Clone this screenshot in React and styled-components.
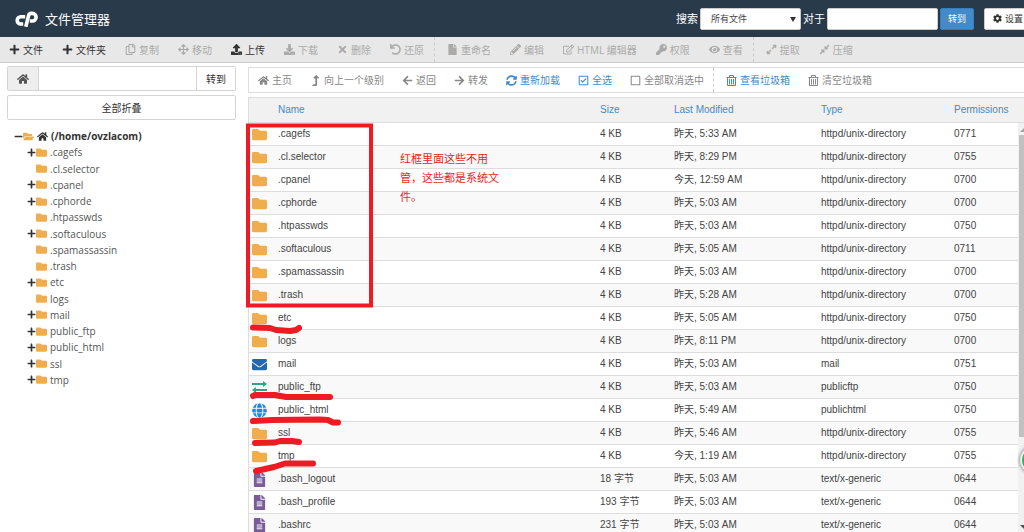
import React from "react";
import styled, { createGlobalStyle } from "styled-components";
import {
  FaPlus, FaMinus, FaRegCopy, FaArrowsAlt, FaUpload, FaDownload, FaTimes, FaUndo, FaFile,
  FaPencilAlt, FaRegEdit, FaKey, FaEye, FaExpandAlt, FaCompressAlt, FaHome, FaLevelUpAlt,
  FaArrowLeft, FaArrowRight, FaSyncAlt, FaRegCheckSquare, FaRegSquare, FaCog,
  FaFolder, FaFolderOpen, FaEnvelope, FaGlobe, FaFileAlt,
} from "react-icons/fa";

const sans = `"Open Sans", "Noto Sans CJK SC", sans-serif`;
const arial = `"Liberation Sans", "Noto Sans CJK SC", sans-serif`;

const Global = createGlobalStyle`
  * { box-sizing: border-box; }
  body { margin: 0; background: #fff; color: #333; font: 10px/16px ${sans}; overflow: hidden; }
  button, input, select { font: inherit; color: inherit; margin: 0; }
`;

const Page = styled.div`
  position: relative;
  height: 100vh;
  display: flex;
  flex-direction: column;
  overflow: hidden;
`;

const Header = styled.header`
  flex: none;
  height: 37px;
  padding-left: 15px;
  background: #293a4a;
  color: #fff;
  display: flex;
  align-items: center;
  overflow: hidden;
`;

const Logo = styled.svg`
  width: 23px;
  height: 16px;
  margin-right: 7px;
`;

const Title = styled.h1`
  margin: 0;
  flex: 1;
  font-size: 13px;
  line-height: 20px;
  font-weight: 400;
`;

const Search = styled.form`
  display: flex;
  align-items: center;
  flex: none;
  font-size: 11px;
  margin-right: -18px;
`;

const Select = styled.select`
  width: 101px;
  height: 22px;
  margin: 0 2px;
  padding: 0 10px;
  appearance: none;
  border: 1px solid #ccc;
  border-radius: 2px;
  font-size: 9px;
  color: #444;
  background: #fff;
`;

const SelectWrap = styled.span`
  position: relative;
  display: flex;
  &::after {
    content: "";
    position: absolute;
    right: 7px;
    top: 9px;
    border: 3px solid transparent;
    border-top: 5px solid #333;
    border-bottom: 0;
  }
`;

const SearchInput = styled.input`
  width: 111px;
  height: 22px;
  margin: 0 2px;
  border: 1px solid #ccc;
  border-radius: 2px;
  background: #fff;
`;

const HeadButton = styled.button`
  height: 22px;
  width: ${(p) => p.$width};
  padding: 0;
  margin-right: 10px;
  display: flex;
  align-items: center;
  justify-content: center;
  gap: 3px;
  font-size: 9px;
  border: 1px solid ${(p) => (p.$primary ? "#357ebd" : "#ccc")};
  border-radius: 2px;
  background: ${(p) => (p.$primary ? "#428bca" : "#fff")};
  color: ${(p) => (p.$primary ? "#fff" : "#333")};
`;

const Tool = styled.button`
  flex: none;
  height: 100%;
  display: flex;
  align-items: center;
  gap: 3px;
  padding: 0 9px;
  margin-right: ${(p) => (p.$divider ? 3 : 0)}px;
  border: 0;
  border-right: ${(p) => (p.$divider ? "1px dashed #ccc" : "0")};
  background: none;
  white-space: nowrap;
  color: ${(p) => ({ on: "#333", off: "#aaa", nav: "#888", link: "#428bca" })[p.$tone]};
  svg { flex: none; }
`;

const Toolbar = styled.nav`
  flex: none;
  height: 26px;
  display: flex;
  background: #e8e8e8;
  border-bottom: 1px solid #ccc;
  ${Tool} { padding-right: 10px; }
`;

const Columns = styled.div`
  flex: 1;
  min-height: 0;
  display: flex;
`;

const Side = styled.aside`
  flex: none;
  width: 248px;
  padding: 3px 12px 0 7px;
`;

const PathBar = styled.form`
  height: 25px;
  display: flex;
  margin-bottom: 4px;
  border: 1px solid #d4d4d4;
  border-radius: 2px;
`;

const HomeAddon = styled.span`
  width: 31px;
  display: flex;
  align-items: center;
  justify-content: center;
  background: #eee;
  border-right: 1px solid #d4d4d4;
  color: #555;
`;

const PathInput = styled.input`
  flex: 1;
  min-width: 0;
  border: 0;
  background: #fff;
`;

const GoButton = styled.button`
  width: 39px;
  padding: 0;
  border: 0;
  border-left: 1px solid #d4d4d4;
  background: #fff;
`;

const CollapseButton = styled.button`
  display: block;
  width: 100%;
  height: 25px;
  padding: 0;
  border: 1px solid #d4d4d4;
  border-radius: 2px;
  background: #fff;
`;

const Tree = styled.ul`
  list-style: none;
  margin: 8px 0 0;
  padding: 0 0 0 7px;
  height: 260px;
  display: grid;
  grid-auto-rows: 1fr;
`;

const TreeItem = styled.li`
  display: flex;
  align-items: center;
  padding-left: ${(p) => (p.$root ? 0 : 13)}px;
  font-weight: ${(p) => (p.$root ? 700 : 400)};
  color: ${(p) => (p.$root ? "#333" : "#555")};
  svg { flex: none; }
`;

const Toggle = styled.span`
  width: 9px;
  display: flex;
  color: #333;
`;

const TreeLabel = styled.span`
  display: flex;
  margin-left: 3px;
`;

const Main = styled.main`
  flex: 1;
  min-width: 0;
  display: flex;
  flex-direction: column;
  padding-top: 4px;
`;

const NavBar = styled.nav`
  flex: none;
  height: 26px;
  margin-bottom: 4px;
  display: flex;
  border: 1px solid #ddd;
  border-right: 0;
`;

const Listing = styled.div`
  flex: 1;
  min-height: 0;
  display: flex;
  align-items: flex-start;
  position: relative;
  border-left: 1px solid #ddd;
`;

const Table = styled.table`
  width: 100%;
  border-collapse: separate;
  border-spacing: 0;
  table-layout: fixed;
  font: 10px/16px ${arial};
  color: #444;
`;

const Th = styled.th`
  height: 26px;
  width: ${(p) => p.$width ?? "auto"};
  padding: 0;
  text-align: left;
  font-weight: 400;
  color: #428bca;
  background: #f1f1f1;
  border-top: 1px solid #ddd;
  border-bottom: 1px solid #ddd;
`;

const Row = styled.tr`
  background: #fff;
  &:nth-child(even) { background: #f9f9f9; }
`;

const Td = styled.td`
  height: 23px;
  padding: 0;
  border-bottom: 1px solid #ddd;
  white-space: nowrap;
`;

const IconCell = styled(Td)`
  padding-left: 3px;
  svg { display: block; }
`;

const ScrollBar = styled.div`
  position: absolute;
  right: 0;
  top: 26px;
  bottom: 0;
  width: 6px;
  background: #f1f1f1;
  overflow: hidden;
  display: flex;
  flex-direction: column;
  justify-content: space-between;
`;

const Arrow = styled.svg`
  flex: none;
  width: 6px;
  height: 12px;
`;

const Thumb = styled.div`
  height: 302px;
  margin: 0 0 auto 1px;
  background: #c1c1c1;
`;

const Marks = styled.svg`
  position: absolute;
  left: 240px;
  top: 120px;
  width: 140px;
  height: 360px;
`;

const Note = styled.p`
  position: absolute;
  left: 400px;
  top: 149px;
  width: 104px;
  margin: 0;
  font-size: 11px;
  line-height: 19px;
  color: #ee1c24;
`;

const Bubble = styled.div`
  position: absolute;
  right: -24px;
  top: 446px;
  width: 28px;
  height: 28px;
  border-radius: 50%;
  border: 2px solid #eee;
  background: #2fb457;
  box-shadow: 0 0 3px 1px #999;
`;

const Bin = ({ size = 11 }) => (
  <svg width={size} height={size} viewBox="0 0 11 11" fill="none" stroke="currentColor">
    <path d="M0.500 2.500h10M3.500 2.500v-2h4v2M1.500 2.500v8h8v-8M3.500 4v5.500M5.500 4v5.500M7.500 4v5.500" />
  </svg>
);

const Swap = () => (
  <svg width="15" height="12" viewBox="0 0 15 12" fill="#27a986">
    <path d="M0 2h11V0l4 3-4 3V4H0zM15 8H4V6L0 9l4 3v-2h11z" />
  </svg>
);

const tools = [
  ["文件", FaPlus, "on"], ["文件夹", FaPlus, "on"], ["复制", FaRegCopy], ["移动", FaArrowsAlt],
  ["上传", FaUpload, "on"], ["下载", FaDownload], ["删除", FaTimes], ["还原", FaUndo, "off", true],
  ["重命名", FaFile], ["编辑", FaPencilAlt], ["HTML 编辑器", FaRegEdit], ["权限", FaKey],
  ["查看", FaEye, "off", true], ["提取", FaExpandAlt], ["压缩", FaCompressAlt],
];

const navs = [
  ["主页", FaHome, "nav"], ["向上一个级别", FaLevelUpAlt, "nav"], ["返回", FaArrowLeft, "nav"],
  ["转发", FaArrowRight, "nav"], ["重新加载", FaSyncAlt, "link"], ["全选", FaRegCheckSquare, "link"],
  ["全部取消选中", FaRegSquare, "nav", true], ["查看垃圾箱", Bin, "link"], ["清空垃圾箱", Bin, "nav"],
];

const tree = [
  [".cagefs", 1], [".cl.selector", 0], [".cpanel", 1], [".cphorde", 1], [".htpasswds", 0],
  [".softaculous", 1], [".spamassassin", 0], [".trash", 0], ["etc", 1], ["logs", 0], ["mail", 1],
  ["public_ftp", 1], ["public_html", 1], ["ssl", 1], ["tmp", 1],
];

const dir = "httpd/unix-directory";
const txt = "text/x-generic";
const files = [
  [".cagefs", "4 KB", "昨天, 5:33 AM", dir, "0771"],
  [".cl.selector", "4 KB", "昨天, 8:29 PM", dir, "0755"],
  [".cpanel", "4 KB", "今天, 12:59 AM", dir, "0700"],
  [".cphorde", "4 KB", "昨天, 5:03 AM", dir, "0700"],
  [".htpasswds", "4 KB", "昨天, 5:03 AM", dir, "0750"],
  [".softaculous", "4 KB", "昨天, 5:05 AM", dir, "0711"],
  [".spamassassin", "4 KB", "昨天, 5:03 AM", dir, "0700"],
  [".trash", "4 KB", "昨天, 5:28 AM", dir, "0700"],
  ["etc", "4 KB", "昨天, 5:05 AM", dir, "0750"],
  ["logs", "4 KB", "昨天, 8:11 PM", dir, "0700"],
  ["mail", "4 KB", "昨天, 5:03 AM", "mail", "0751"],
  ["public_ftp", "4 KB", "昨天, 5:03 AM", "publicftp", "0750"],
  ["public_html", "4 KB", "昨天, 5:49 AM", "publichtml", "0750"],
  ["ssl", "4 KB", "昨天, 5:46 AM", dir, "0755"],
  ["tmp", "4 KB", "今天, 1:19 AM", dir, "0755"],
  [".bash_logout", "18 字节", "昨天, 5:03 AM", txt, "0644"],
  [".bash_profile", "193 字节", "昨天, 5:03 AM", txt, "0644"],
  [".bashrc", "231 字节", "昨天, 5:03 AM", txt, "0644"],
];

function FileIcon({ type }) {
  if (type === "mail") return <FaEnvelope size={15} color="#2467b0" />;
  if (type === "publicftp") return <Swap />;
  if (type === "publichtml") return <FaGlobe size={15} color="#1b8be0" />;
  if (type === txt) return <FaFileAlt size={15} color="#7b5c9b" />;
  return <FaFolder size={15} color="#f0ad4e" />;
}

export default function App() {
  return (
    <Page>
      <Global />
      <Header>
        <Logo viewBox="0 0 23 16" fill="none" stroke="#fff" strokeWidth="3.600" strokeLinejoin="round">
          <path d="M10.200 5.800H5.800a3.600 3.600 0 0 0 0 7.200H8.200" />
          <path d="M10.800 15.800L13.600 4.600Q14.100 2.400 16.200 2.400H17.300a3.800 3.800 0 0 1 0 7.600H14.800" />
        </Logo>
        <Title>文件管理器</Title>
        <Search onSubmit={(e) => e.preventDefault()}>
          <label htmlFor="scope">搜索</label>
          <SelectWrap>
            <Select id="scope"><option>所有文件</option></Select>
          </SelectWrap>
          <label htmlFor="query">对于</label>
          <SearchInput id="query" />
          <HeadButton $primary $width="34px">转到</HeadButton>
          <HeadButton type="button" $width="48px"><FaCog size={9} />设置</HeadButton>
        </Search>
      </Header>
      <Toolbar>
        {tools.map(([label, Icon, tone = "off", divider]) => (
          <Tool key={label} $tone={tone} $divider={divider}><Icon size={11} />{label}</Tool>
        ))}
      </Toolbar>
      <Columns>
        <Side>
          <PathBar onSubmit={(e) => e.preventDefault()}>
            <HomeAddon><FaHome size={12} /></HomeAddon>
            <PathInput aria-label="路径" />
            <GoButton>转到</GoButton>
          </PathBar>
          <CollapseButton>全部折叠</CollapseButton>
          <Tree>
            <TreeItem $root>
              <Toggle><FaMinus size={9} /></Toggle>
              <FaFolderOpen size={11} color="#f0ad4e" />
              <TreeLabel><FaHome size={11} /></TreeLabel>
              <TreeLabel>(/home/ovzlacom)</TreeLabel>
            </TreeItem>
            {tree.map(([name, open]) => (
              <TreeItem key={name}>
                <Toggle>{open ? <FaPlus size={9} /> : null}</Toggle>
                <FaFolder size={11} color="#f0ad4e" />
                <TreeLabel>{name}</TreeLabel>
              </TreeItem>
            ))}
          </Tree>
        </Side>
        <Main>
          <NavBar>
            {navs.map(([label, Icon, tone, divider]) => (
              <Tool key={label} $tone={tone} $divider={divider}><Icon size={11} />{label}</Tool>
            ))}
          </NavBar>
          <Listing>
            <Table>
              <thead>
                <tr>
                  <Th $width="29px" />
                  <Th>Name</Th>
                  <Th $width="74px">Size</Th>
                  <Th $width="147px">Last Modified</Th>
                  <Th $width="133px">Type</Th>
                  <Th $width="70px">Permissions</Th>
                </tr>
              </thead>
              <tbody>
                {files.map(([name, size, date, type, perm]) => (
                  <Row key={name}>
                    <IconCell><FileIcon type={type} /></IconCell>
                    <Td>{name}</Td><Td>{size}</Td><Td>{date}</Td><Td>{type}</Td><Td>{perm}</Td>
                  </Row>
                ))}
              </tbody>
            </Table>
            <ScrollBar>
              <Arrow viewBox="0 0 6 12" fill="#a3a3a3"><path d="M2 9L6 5v4z" /></Arrow>
              <Thumb />
              <Arrow viewBox="0 0 6 12" fill="#505050"><path d="M2 5h4v4z" /></Arrow>
            </ScrollBar>
          </Listing>
        </Main>
      </Columns>
      <Marks viewBox="240 120 140 360" fill="none" stroke="#ed1c24" strokeLinecap="round" strokeLinejoin="round">
        <path d="M248 125.500h123v180h-123z" strokeWidth="4" strokeLinejoin="miter" />
        <path d="M253 327.500L270 328L276 330L290 331L296 330L299 328" strokeWidth="6" />
        <path d="M253 396L255 395H275L286 397L330 397" strokeWidth="6" />
        <path d="M253 421L272 420L320 419.500L328 420L333 422.500H338" strokeWidth="6" />
        <path d="M255 443L275 442.500L280 441L292 441L299 442" strokeWidth="6" />
        <path d="M256 471L274 467L285 463.500H313" strokeWidth="6" />
      </Marks>
      <Note>红框里面这些不用管，这些都是系统文件。</Note>
      <Bubble />
    </Page>
  );
}
